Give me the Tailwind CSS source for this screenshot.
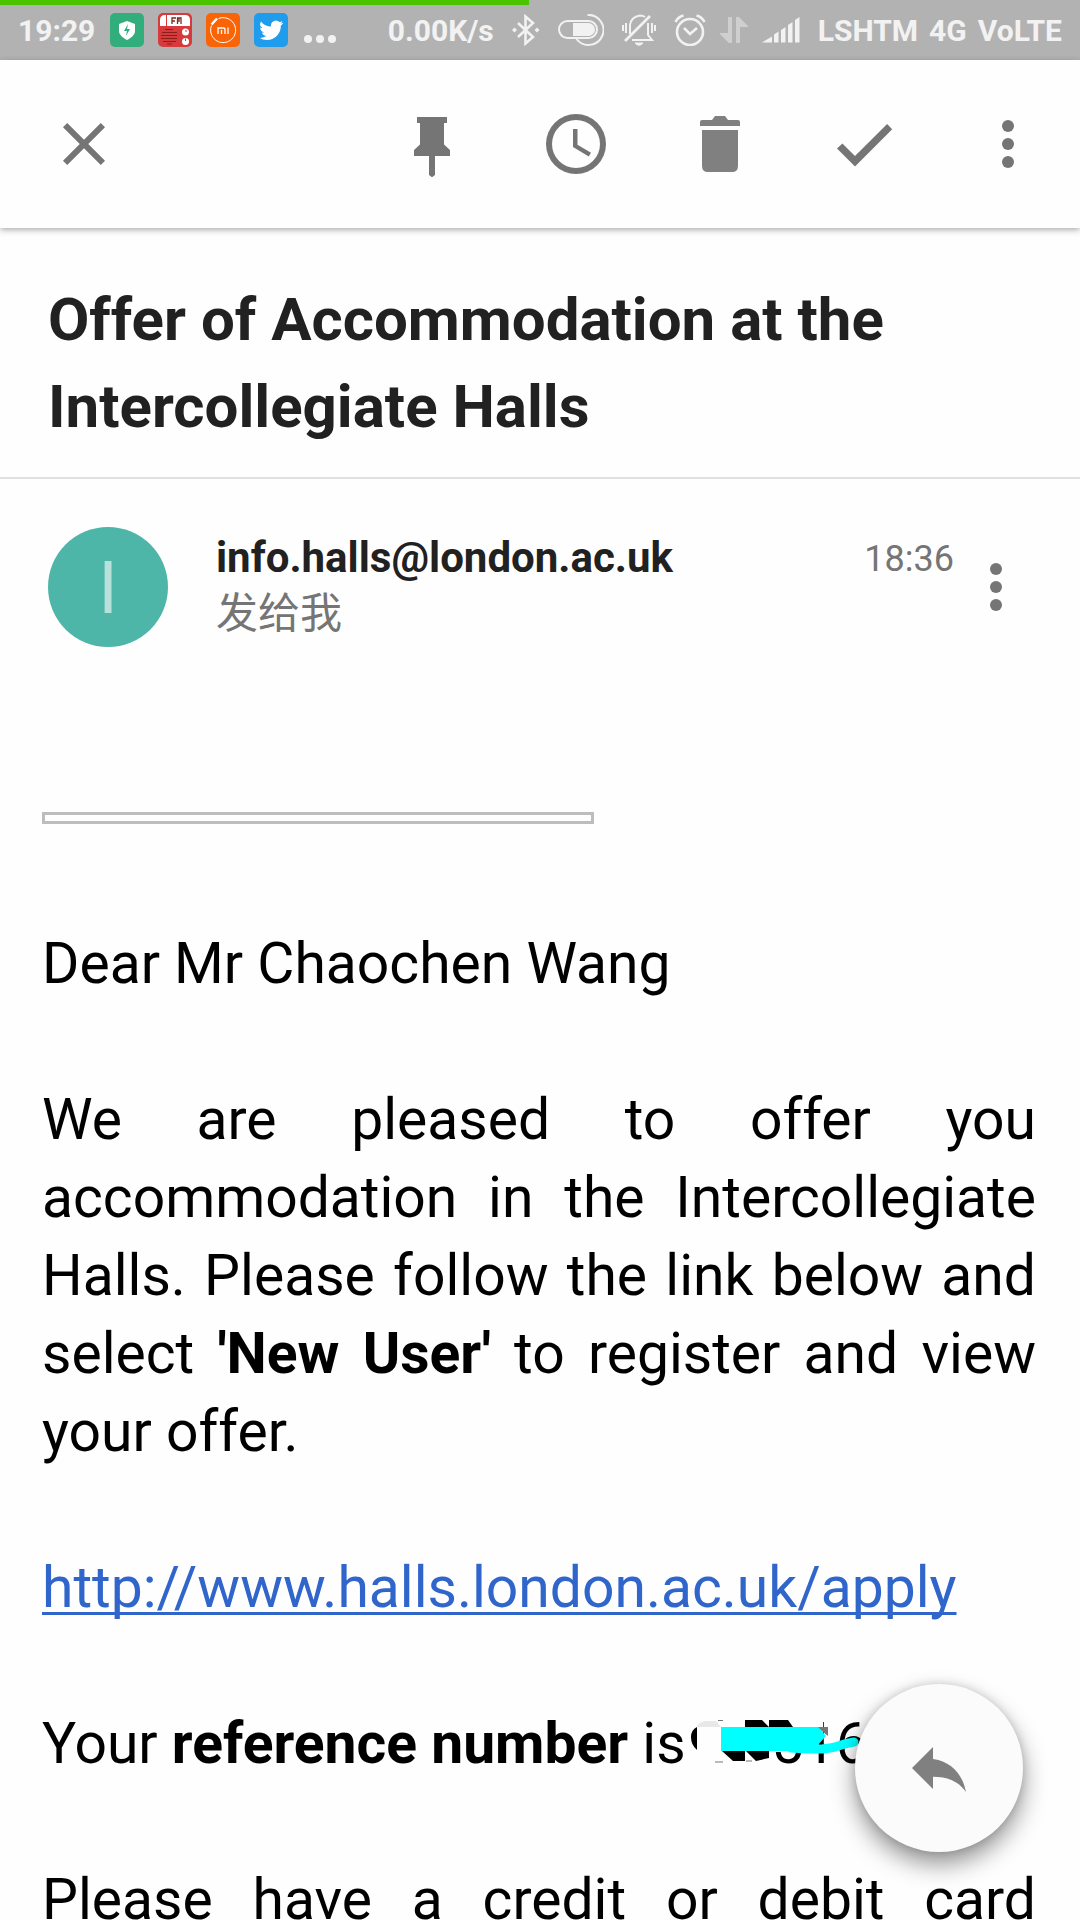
<!DOCTYPE html>
<html lang="en">
<head>
<meta charset="utf-8">
<meta name="viewport" content="width=device-width, initial-scale=1">
<title>Offer of Accommodation at the Intercollegiate Halls</title>
<script src="https://cdn.jsdelivr.net/npm/@tailwindcss/browser@4"></script>
</head>
<body class="bg-[#fefefe] font-['Roboto','Noto_Sans_CJK_SC',sans-serif] text-black">
<div class="relative flex h-screen flex-col overflow-hidden">

  <!-- System status bar -->
  <div class="relative flex h-[60px] shrink-0 items-center justify-between bg-[#b2b2b2] pr-[18px] pl-[18px] text-[30px] leading-[58px] font-bold text-[#f2f2f2]">
    <div class="absolute top-0 left-0 h-[5px] w-[49%] bg-[#4bc400]"></div>
    <div class="flex items-center gap-[14px]">
      <span class="w-[78px] pt-[2px]">19:29</span>
      <svg class="size-[34px]" viewBox="0 0 34 34" aria-hidden="true">
        <rect width="34" height="34" rx="5" fill="#31ae7b"/>
        <path d="M17 8l8 3v7c0 4-4 7-8 9-4-2-8-5-8-9v-7z" fill="#fff"/>
        <path d="M18 11l-4 7h3l-1 5 4-7h-3z" fill="#31ae7b"/>
      </svg>
      <svg class="size-[34px]" viewBox="0 0 34 34" aria-hidden="true">
        <rect width="34" height="34" rx="5" fill="#d63a3c"/>
        <path d="M2 13V7q0-5 5-5h1v11zM9 2h18q5 0 5 5v6H9z" fill="#fff"/>
        <path d="M14 11V5h4M14 8h3M19.500 11V5h3.500v6M21 5v4" fill="none" stroke="#7a2a20" stroke-width="1.300"/>
        <path d="M7 16.500h8M4 19.500h15M3 22.500h16M3 25.500h16M5 28.500h13M9 31h5" stroke="#8a1f18" stroke-width="1.200"/>
        <circle cx="27.500" cy="19" r="3.500" fill="#fff"/><circle cx="27.500" cy="28.500" r="3.500" fill="#fff"/>
        <path d="M27 18h2M27.500 25.500v2.500" stroke="#d63a3c"/>
      </svg>
      <svg class="size-[34px]" viewBox="0 0 34 34" aria-hidden="true">
        <rect width="34" height="34" rx="5" fill="#f96506"/>
        <path d="M12.500 5.500A12.500 12.500 0 1 1 5.500 12.500" fill="none" stroke="#fff" stroke-width="1"/>
        <path d="M5.500 11.500l5.500-6" stroke="#fff" stroke-width="2.500"/>
        <path d="M12 21v-6h5.500q1.500 0 1.500 1.500V21M15.500 17v4M22 14.500V21" fill="none" stroke="#fff" stroke-width="1.300"/>
      </svg>
      <svg class="size-[34px]" viewBox="0 0 34 34" aria-hidden="true">
        <rect width="34" height="34" rx="5" fill="#1f9cec"/>
        <path transform="translate(5.300 5.300)" fill="#fff" d="M23.950 4.570a10 10 0 0 1-2.820.78 4.960 4.960 0 0 0 2.160-2.730c-.95.56-2 .96-3.130 1.190a4.920 4.920 0 0 0-8.380 4.480A13.900 13.900 0 0 1 1.640 3.160a4.920 4.920 0 0 0 1.520 6.570 4.900 4.900 0 0 1-2.230-.61v.06a4.920 4.920 0 0 0 3.950 4.830 5 5 0 0 1-2.210.08 4.940 4.940 0 0 0 4.600 3.420A9.870 9.870 0 0 1 0 19.540a14 14 0 0 0 7.550 2.210c9.050 0 14-7.500 14-13.980 0-.21 0-.42-.02-.63a9.940 9.940 0 0 0 2.460-2.550z"/>
      </svg>
      <svg class="h-[34px] w-[36px]" viewBox="0 0 36 34" fill="#f2f2f2" aria-hidden="true"><circle cx="6" cy="26" r="4"/><circle cx="18" cy="26" r="4"/><circle cx="30" cy="26" r="4"/></svg>
    </div>

    <div class="flex items-center gap-[18px]">
      <span class="pt-[2px]">0.00K/s</span>
      <svg class="h-[32px] w-[28px]" viewBox="0 0 28 32" aria-hidden="true">
        <path d="M6 9l15 14-7.500 6.500V2.500L21 9 6 23" fill="none" stroke="#f2f2f2" stroke-width="2.600"/>
        <path d="M2.500 13.500L5 16l-2.500 2.500L0 16zM25 13.500l2.500 2.500-2.500 2.500-2.500-2.500z" fill="#f2f2f2"/>
      </svg>
      <svg class="h-[32px] w-[46px]" viewBox="0 0 46 32" fill="none" stroke="#f2f2f2" stroke-width="2" aria-hidden="true">
        <rect x="1" y="7" width="38" height="17" rx="8.500"/>
        <path d="M15 9h15.500a6.500 6.500 0 0 1 0 13H15z" fill="#f2f2f2" stroke="none"/>
        <path d="M29.500 1a15 15 0 1 1-11 24"/>
      </svg>
      <svg class="h-[32px] w-[34px]" viewBox="0 0 34 32" fill="none" stroke="#f2f2f2" stroke-width="2" aria-hidden="true">
        <path d="M3 27L28 2" stroke-width="2.600"/>
        <path d="M8 20v-9q1-8 10-9.500 3 0 5 1.500M26 9v12l4 5H10"/>
        <path d="M13 29h8q-4 4.500-8 0z" fill="#f2f2f2" stroke-width="1"/>
        <path d="M1 11v6M4 9v10M30 9v10M33 11v6"/>
      </svg>
      <div class="flex items-center gap-[14px]">
        <svg class="h-[32px] w-[32px]" viewBox="0 0 32 32" fill="none" stroke="#f2f2f2" stroke-width="2.600" aria-hidden="true">
          <circle cx="16" cy="18" r="13"/>
          <path d="M10 14l6 6 7-6M1.500 8Q4 3 9.500 1.500M22.500 1.500Q28 3 30.500 8"/>
        </svg>
        <svg class="h-[28px] w-[28px]" viewBox="0 0 28 28" fill="#cfcfcf" aria-hidden="true">
          <path d="M8 1h4v26h-3L0 18v-1h8zM20 27h-4V1h3l9 9v1h-8z"/>
        </svg>
        <svg class="h-[26px] w-[38px]" viewBox="0 0 38 26" fill="#f2f2f2" aria-hidden="true">
          <path d="M0 25.500l10-6v6zM12 25.500v-8l4.500-3v11zM19 25.500V13l4.500-3v15.500zM26 25.500V8l4.500-3v20.500zM33 25.500V3l4.500-3v25.500z"/>
        </svg>
      </div>
      <div class="flex gap-[11px] pt-[2px]"><span>LSHTM</span><span>4G</span><span>VoLTE</span></div>
    </div>
  </div>

  <!-- Toolbar -->
  <header class="relative flex h-[168px] shrink-0 items-center justify-between bg-[#fefefe] text-[#757575] shadow-[0_2px_6px_rgba(0,0,0,0.32)]">
    <button type="button" aria-label="Close" class="flex h-full w-[168px] items-center justify-center">
      <svg class="size-[72px]" viewBox="0 0 24 24" fill="currentColor"><path d="M19 6.410L17.590 5 12 10.590 6.410 5 5 6.410 10.590 12 5 17.590 6.410 19 12 13.410 17.590 19 19 17.590 13.410 12z"/></svg>
    </button>
    <div class="flex h-full">
      <button type="button" aria-label="Pin" class="flex w-[144px] items-center justify-center">
        <svg class="size-[72px]" viewBox="0 0 24 24" fill="currentColor"><path d="M7 3h10v2h-1v7.200l2 1.800v2h-5v6.300l-1 .8-1-.8V16H6v-2l2-1.800V5H7z"/></svg>
      </button>
      <button type="button" aria-label="Snooze" class="flex w-[144px] items-center justify-center">
        <svg class="size-[72px]" viewBox="0 0 24 24" fill="currentColor"><path d="M12 2a10 10 0 1 0 0 20 10 10 0 0 0 0-20zm0 18a8 8 0 1 1 0-16 8 8 0 0 1 0 16zm.5-13H11v6l5.250 3.150.75-1.230-4.500-2.670z"/></svg>
      </button>
      <button type="button" aria-label="Delete" class="flex w-[144px] items-center justify-center text-[#808080]">
        <svg class="size-[72px]" viewBox="0 0 72 72" fill="currentColor"><path d="M16 18v-4q0-2 2-2h10l3-4h10l3 4h10q2 0 2 2v4zM18 22h36v36q0 6-6 6H24q-6 0-6-6z"/></svg>
      </button>
      <button type="button" aria-label="Mark as done" class="flex w-[144px] items-center justify-center">
        <svg class="size-[72px]" viewBox="0 0 24 24" fill="currentColor"><path d="M9 16l-4.200-4.200L3 13.500l6 6L21.400 7.100l-1.700-1.800z"/></svg>
      </button>
      <button type="button" aria-label="More options" class="flex w-[144px] items-center justify-center">
        <svg class="size-[72px]" viewBox="0 0 24 24" fill="currentColor"><circle cx="12" cy="6" r="2"/><circle cx="12" cy="12" r="2"/><circle cx="12" cy="18" r="2"/></svg>
      </button>
    </div>
  </header>

  <main class="min-h-0 flex-1 overflow-hidden">
    <h1 class="border-b-2 border-[#e0e0e0] px-12 pt-12 pb-[27px] text-[60px] leading-[87px] font-bold text-[#212121]">Offer of Accommodation at the Intercollegiate Halls</h1>

    <!-- Sender -->
    <section class="flex items-start pt-12 pr-[42px] pl-12">
      <div class="flex size-[120px] shrink-0 items-center justify-center rounded-full bg-[#4eb5a9] pt-1 text-[72px] text-[#b9e1dc]">I</div>
      <div class="ml-12 flex-1 pt-[3px] text-[42px] leading-[56px]">
        <div class="font-bold text-[#212121]">info.halls@london.ac.uk</div>
        <div class="text-[#757575]">发给我</div>
      </div>
      <time class="text-4xl leading-[64px] text-[#757575]">18:36</time>
      <button type="button" aria-label="Message options" class="flex h-[120px] w-[84px] items-center justify-center text-[#757575]">
        <svg class="size-[72px]" viewBox="0 0 24 24" fill="currentColor"><circle cx="12" cy="6" r="2"/><circle cx="12" cy="12" r="2"/><circle cx="12" cy="18" r="2"/></svg>
      </button>
    </section>

    <!-- Message body -->
    <article class="pt-[165px] pr-11 pl-[42px] text-[57px] leading-[78px]">
      <div class="h-3 w-[552px] border-[3px] border-[#bdbdbd]"></div>
      <p class="mt-[101px]">Dear Mr Chaochen Wang</p>
      <p class="mt-[78px] text-justify">We are pleased to offer you accommodation in the Intercollegiate Halls. Please follow the link below and select <b>'New User'</b> to register and view your offer.</p>
      <p class="mt-[78px]"><a href="http://www.halls.london.ac.uk/apply" class="text-[#3065cb] underline decoration-[3px] underline-offset-[5px] [text-decoration-skip-ink:none]">http://www.halls.london.ac.uk/apply</a></p>
      <p class="mt-[78px]">Your <b>reference number</b> is<span class="relative pl-[86px]">516
        <!-- Redaction scribble over the number -->
        <svg class="absolute top-0 left-[3px] h-[66px] w-[180px]" viewBox="688 1711 180 66" aria-hidden="true">
          <path d="M770 1716h52v20h-52z" fill="#fefefe"/>
          <path d="M696 1728q-6 3-6 10 0 8 6 13z"/>
          <path d="M696 1727q3-5 10-5h9l5 6h-24z" fill="#e8e8e8"/>
          <path d="M744 1721h17l7 7h-24zM768 1721h19l5 7h-24z"/>
          <path d="M721 1752h23v10h-12zM745 1752h23v7l-13 3z"/>
          <path d="M714 1763h8M745 1762h6M717 1721.500h5" stroke="#777"/>
          <path d="M816 1728h11v9z" fill="#777"/>
          <path d="M720 1728h97l8 9-9 10-6 3v3l-10-1h-80z" fill="#0ff"/>
          <path d="M790 1749q35 3 47-2 9-3 16-4" fill="none" stroke="#0ff" stroke-width="9" stroke-linecap="round"/>
        </svg></span></p>
      <p class="mt-[78px] text-justify [text-align-last:justify]">Please have a credit or debit card</p>
    </article>
  </main>

  <button type="button" aria-label="Reply" class="absolute right-[57px] bottom-[68px] flex size-[168px] items-center justify-center rounded-full bg-[#fbfbfb] text-[#808080] shadow-[0_12px_24px_rgba(0,0,0,0.42),0_0_10px_rgba(0,0,0,0.15)]">
    <svg class="size-[72px]" viewBox="0 0 24 24" fill="currentColor"><path d="M10 9V5l-7 7 7 7v-4.100c5 0 8.500 1.600 11 5.100-1-5-4-10-11-11z"/></svg>
  </button>
</div>
</body>
</html>
